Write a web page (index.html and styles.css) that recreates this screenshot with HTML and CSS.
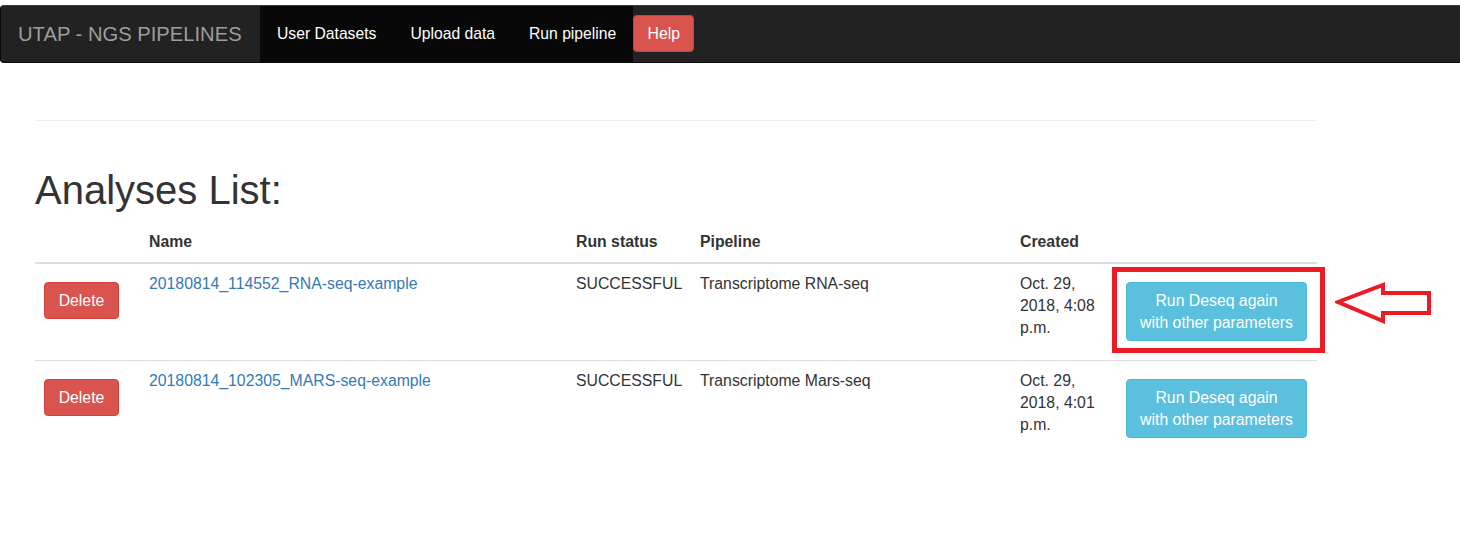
FILE: index.html
```html
<!DOCTYPE html>
<html>
<head>
<meta charset="utf-8">
<title>UTAP - Analyses List</title>
<link rel="stylesheet" href="styles.css">
</head>
<body>
<nav class="navbar">
  <a class="brand" href="#">UTAP - NGS PIPELINES</a>
  <ul class="nav">
    <li><a href="#">User Datasets</a></li>
    <li><a href="#">Upload data</a></li>
    <li><a href="#">Run pipeline</a></li>
  </ul>
  <a class="help" href="#">Help</a>
</nav>
<main class="container">
  <hr class="divider">
  <h1 class="title">Analyses List:</h1>
  <table class="analyses">
    <colgroup>
      <col class="c1"><col class="c2"><col class="c3"><col class="c4"><col class="c5"><col class="c6">
    </colgroup>
    <thead>
      <tr><th></th><th>Name</th><th>Run status</th><th>Pipeline</th><th>Created</th><th></th></tr>
    </thead>
    <tbody>
      <tr>
        <td><button class="btn btn-danger">Delete</button></td>
        <td><a href="#" class="link">20180814_114552_RNA-seq-example</a></td>
        <td>SUCCESSFUL</td>
        <td>Transcriptome RNA-seq</td>
        <td>Oct. 29, 2018, 4:08 p.m.</td>
        <td><button class="btn btn-info">Run Deseq again<br>with other parameters</button></td>
      </tr>
      <tr>
        <td><button class="btn btn-danger">Delete</button></td>
        <td><a href="#" class="link">20180814_102305_MARS-seq-example</a></td>
        <td>SUCCESSFUL</td>
        <td>Transcriptome Mars-seq</td>
        <td>Oct. 29, 2018, 4:01 p.m.</td>
        <td><button class="btn btn-info">Run Deseq again<br>with other parameters</button></td>
      </tr>
    </tbody>
  </table>
</main>
<div class="highlight-box"></div>
<svg class="arrow" width="110" height="50" viewBox="0 0 110 50">
  <polygon points="3,20 48,3 48,11 94,11 94,31 48,31 48,39" fill="none" stroke="#ed1c24" stroke-width="4" stroke-linejoin="miter"/>
</svg>
</body>
</html>
```
FILE: styles.css
```css
html, body {
  margin: 0;
  padding: 0;
  background: #fff;
}
body {
  font-family: "Liberation Sans", Arial, sans-serif;
  font-size: 15.8px;
  line-height: 22px;
  color: #333;
  border-top: 5px solid #fff;
  position: relative;
  overflow: hidden;
}
.navbar {
  display: flex;
  align-items: stretch;
  height: 56px;
  background: #222;
  border: 1px solid #080808;
  border-top-color: #3a3a3a;
  border-radius: 4px;
  margin-right: -8px;
}
.brand {
  display: flex;
  align-items: center;
  padding: 0 18px 0 17px;
  font-size: 20.2px;
  color: #9d9d9d;
  text-decoration: none;
  width: 224px;
  white-space: nowrap;
}
.nav {
  display: flex;
  list-style: none;
  margin: 0;
  padding: 0;
  background: #080808;
}
.nav li {
  display: flex;
}
.nav a {
  display: flex;
  align-items: center;
  padding: 0 17px;
  color: #fff;
  text-decoration: none;
  font-size: 15.7px;
}
.help {
  align-self: center;
  margin-top: -1px;
  display: block;
  height: 37px;
  width: 61px;
  box-sizing: border-box;
  background: #d9534f;
  border: 1px solid #d43f3a;
  border-radius: 4px;
  color: #fff;
  text-decoration: none;
  text-align: center;
  line-height: 35px;
  font-size: 15.8px;
}
.container {
  width: 1282px;
  margin-left: 35px;
}
.divider {
  margin: 57px 0 0;
  border: 0;
  border-top: 1px solid #eee;
  height: 0;
}
.title {
  margin: 47px 0 10px;
  font-size: 40px;
  font-weight: 400;
  line-height: 44px;
  color: #333;
}
.analyses {
  width: 1282px;
  border-collapse: collapse;
  table-layout: fixed;
}
.c1 { width: 105px; }
.c2 { width: 427px; }
.c3 { width: 124px; }
.c4 { width: 320px; }
.c5 { width: 106px; }
.c6 { width: 200px; }
.analyses th {
  text-align: left;
  font-weight: 700;
  padding: 9px;
  border-bottom: 2px solid #ddd;
  vertical-align: bottom;
}
.analyses td {
  padding: 9px;
  vertical-align: top;
  border-top: 1px solid #ddd;
}
.analyses tbody tr:first-child td {
  border-top: 0;
}
.link {
  color: #337ab7;
  text-decoration: none;
}
.btn {
  font-family: inherit;
  font-size: 15.8px;
  line-height: 22px;
  padding: 6.5px 13px;
  border-radius: 4px;
  border: 1px solid transparent;
  color: #fff;
  margin: 9px 0 10px;
  display: block;
  cursor: pointer;
}
.btn-danger {
  background: #d9534f;
  border-color: #d43f3a;
  width: 75px;
  padding: 6.5px 0;
}
.btn-info {
  background: #5bc0de;
  border-color: #46b8da;
  width: 181px;
  padding: 6.5px 0;
  text-align: center;
}
.highlight-box {
  position: absolute;
  left: 1112px;
  top: 262px;
  width: 203px;
  height: 76px;
  border: 5px solid #ed1c24;
}
.arrow {
  position: absolute;
  left: 1335px;
  top: 277px;
}
```
